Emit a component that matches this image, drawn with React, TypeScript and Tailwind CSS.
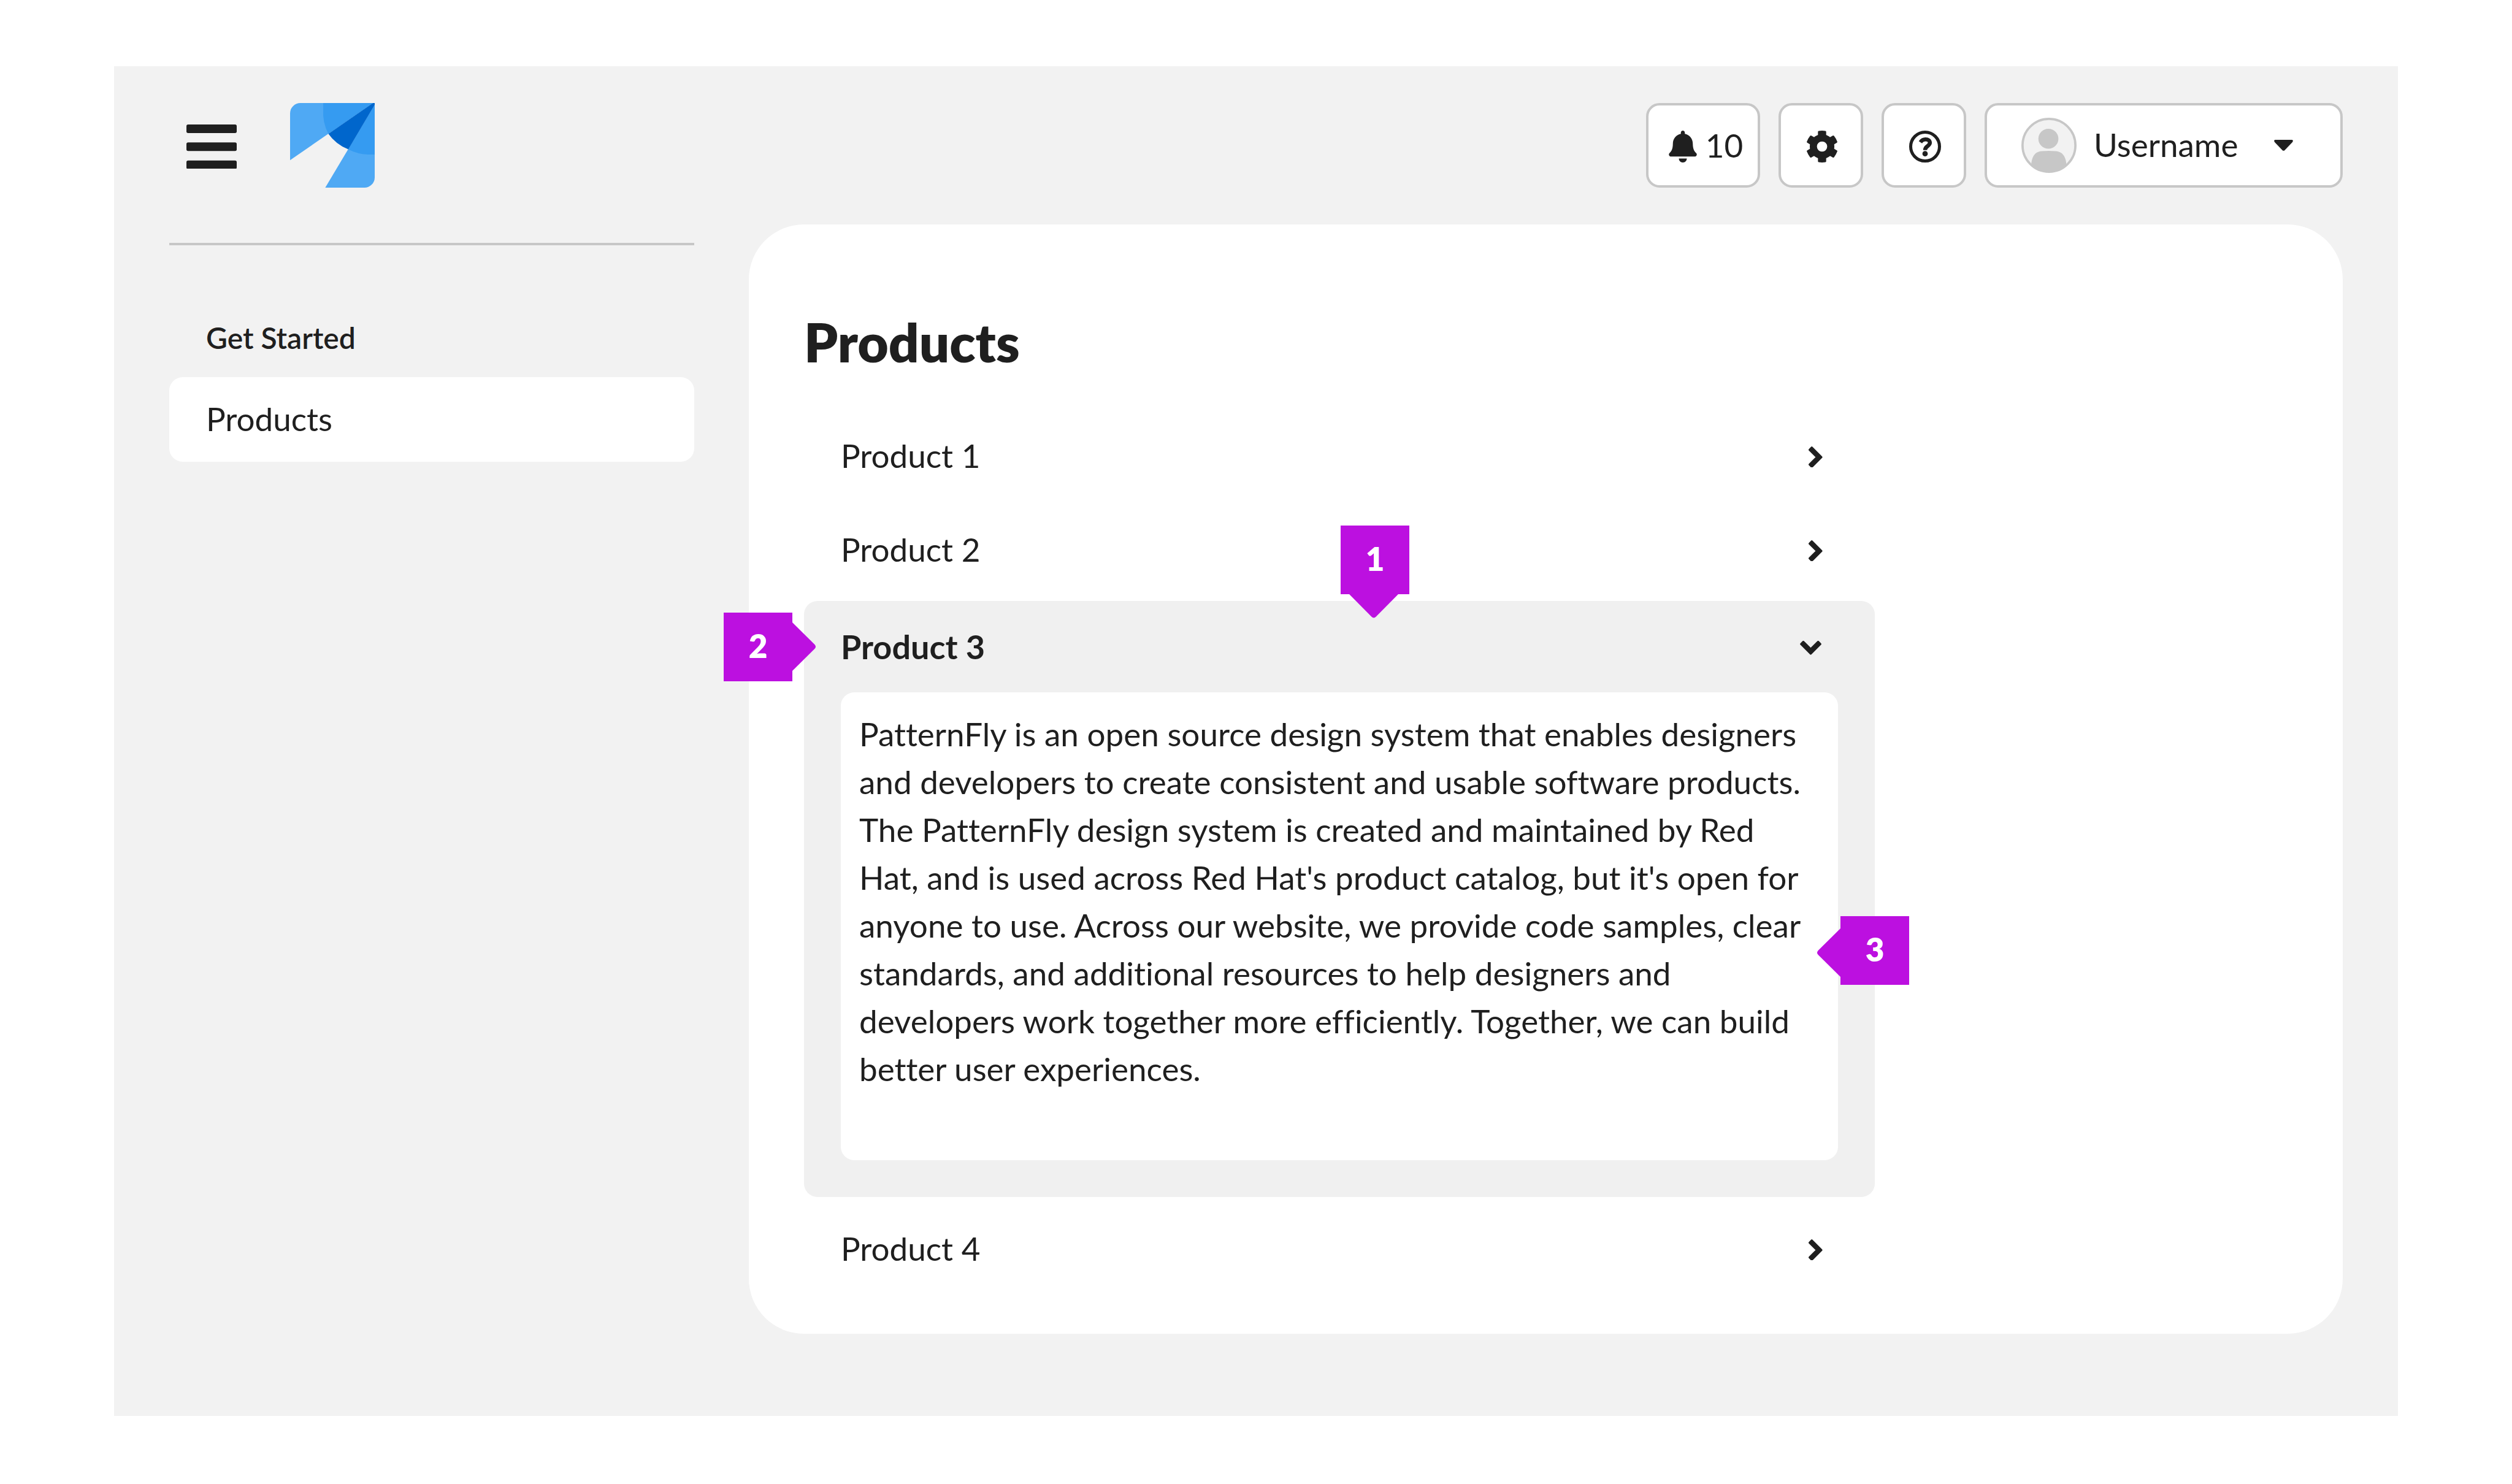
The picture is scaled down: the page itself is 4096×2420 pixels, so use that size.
import type { ReactNode } from "react";
import { FaBell } from "react-icons/fa";

function MenuIcon() {
  return (
    <svg viewBox="0 0 88 78" className="w-[82px]" fill="currentColor" aria-hidden="true">
      <rect y="0" width="88" height="15" rx="3" />
      <rect y="31.5" width="88" height="15" rx="3" />
      <rect y="63" width="88" height="15" rx="3" />
    </svg>
  );
}

function Logo() {
  return (
    <svg viewBox="0 0 148 148" className="size-[138px]" role="img" aria-label="PatternFly">
      <path fill="#4fa9f4" d="M18 0H145L0 100V18A18 18 0 0 1 18 0Z" />
      <path fill="#4fa9f4" d="M148 3V130A18 18 0 0 1 130 148H61.5Z" />
      <path fill="#359bf1" d="M58 0H145L67 53.8A78 78 0 0 1 58 12Z" />
      <path fill="#359bf1" d="M148 3V90H136A78 78 0 0 1 101.8 81Z" />
      <path fill="#0066cc" d="M145 0H148V3L101.8 81A78 78 0 0 1 67 53.8Z" />
    </svg>
  );
}

function CogIcon() {
  return (
    <svg viewBox="-28 -28 56 56" className="size-[52px]" fill="currentColor" aria-hidden="true">
      <circle r="15.3" fill="none" stroke="currentColor" strokeWidth="12.6" />
      {[0, 60, 120, 180, 240, 300].map((angle) => (
        <path
          key={angle}
          transform={`rotate(${angle})`}
          d="M-7.2 -17V-25.8Q-7.2 -27.2 -5.8 -27.5Q0 -28.4 5.8 -27.5Q7.2 -27.2 7.2 -25.8V-17Z"
        />
      ))}
    </svg>
  );
}

function HelpIcon() {
  return (
    <svg viewBox="-28 -28 56 56" className="size-[52px]" fill="none" stroke="currentColor" aria-hidden="true">
      <circle r="25.3" strokeWidth="5.4" />
      <path
        d="M-8.2 -7.6C-5.8 -11.2 -2.6 -12.7 0.8 -12.7C5.4 -12.7 8.4 -10.2 8.4 -6.6C8.4 -0.8 0 -0.9 0 6.2"
        strokeWidth="7"
      />
      <circle cy="12.6" r="4.7" fill="currentColor" stroke="none" />
    </svg>
  );
}

function AvatarIcon() {
  return (
    <svg viewBox="0 0 96 96" className="size-[90px]" aria-hidden="true">
      <clipPath id="avatar-clip">
        <circle cx="48" cy="48" r="47" />
      </clipPath>
      <circle cx="48" cy="48" r="46" fill="#f2f2f2" stroke="#c7c7c7" strokeWidth="4" />
      <g fill="#c7c7c7" clipPath="url(#avatar-clip)">
        <circle cx="47" cy="36.5" r="17.4" />
        <path d="M17 82C18.500 66 24 59 35 58Q47.500 57.200 60 58C71 59 77 66 78.500 82V96H17Z" />
      </g>
    </svg>
  );
}

function CaretIcon() {
  return (
    <svg viewBox="0 0 33 19" className="w-[31px]" fill="currentColor" aria-hidden="true">
      <path d="M2 0H31Q34 0.600 32 4L18.500 18Q16.500 19.800 14.500 18L1 4Q-1 0.600 2 0Z" />
    </svg>
  );
}

function Chevron({ open }: { open: boolean }) {
  return open ? (
    <svg viewBox="0 0 38 25" className="w-[35px]" fill="currentColor" stroke="currentColor" strokeWidth="4" strokeLinejoin="round" aria-hidden="true">
      <path d="M19 22.500L2.200 5.700L5.900 2L19 15.100L32.100 2L35.800 5.700Z" />
    </svg>
  ) : (
    <svg viewBox="0 0 25 38" className="w-[23px]" fill="currentColor" stroke="currentColor" strokeWidth="4" strokeLinejoin="round" aria-hidden="true">
      <path d="M22.500 19L5.700 2.200L2 5.900L15.100 19L2 32.100L5.700 35.800Z" />
    </svg>
  );
}

function HeaderButton({ className, label, children }: { className: string; label?: string; children: ReactNode }) {
  return (
    <button
      type="button"
      aria-label={label}
      className={`flex h-[138px] items-center rounded-[22px] border-4 border-[#c7c7c7] bg-white ${className}`}
    >
      {children}
    </button>
  );
}

function Callout({ n, className, arrow }: { n: number; className: string; arrow: string }) {
  return (
    <div className={`absolute z-10 flex size-[112px] items-center justify-center bg-[#bc10e0] text-white ${className}`}>
      <svg viewBox="0 0 84 41" className={`absolute h-[39px] w-[80px] ${arrow}`} fill="#bc10e0" aria-hidden="true">
        <path d="M0 0L38 38.500Q42 42.500 46 38.500L84 0Z" />
      </svg>
      <span className="relative pb-1 font-extrabold">{n}</span>
    </div>
  );
}

function ProductRow({ name }: { name: string }) {
  return (
    <h2>
      <button type="button" aria-expanded={false} className="flex h-[138px] w-full items-center justify-between pt-1 pr-[85px] pl-[60px]">
        <span className="pb-1">{name}</span>
        <Chevron open={false} />
      </button>
    </h2>
  );
}

export default function App() {
  return (
    <div className="flex min-h-screen bg-white px-[186px] pt-[108px] pb-[111px] font-['Lato',sans-serif] text-[53px] leading-[78px] text-[#1f1f1f] [font-variant-ligatures:none]">
      <div className="flex flex-1 flex-col gap-[60px] bg-[#f2f2f2] px-[90px] pt-[60px] pb-[134px]">
        <header className="flex items-center justify-between">
          <div className="flex items-center gap-[59px]">
            <button type="button" aria-label="Toggle navigation" className="flex size-[138px] items-center justify-center pt-1">
              <MenuIcon />
            </button>
            <Logo />
          </div>
          <div className="flex gap-[30px]">
            <HeaderButton className="w-[186px] justify-center gap-[11px] pt-1 pl-[6px]" label="10 notifications">
              <FaBell size={52} aria-hidden="true" />
              <span className="pb-1">10</span>
            </HeaderButton>
            <HeaderButton className="w-[138px] justify-center pt-1 pl-1" label="Settings">
              <CogIcon />
            </HeaderButton>
            <HeaderButton className="w-[138px] justify-center pt-1 pl-1" label="Help">
              <HelpIcon />
            </HeaderButton>
            <HeaderButton className="w-[584px] gap-[28px] pr-[77px] pl-[56px]">
              <AvatarIcon />
              <span className="flex-1 pb-0.5 text-left">Username</span>
              <CaretIcon />
            </HeaderButton>
          </div>
        </header>

        <div className="flex flex-1 gap-[89px]">
          <nav aria-label="Primary" className="w-[856px] shrink-0 pt-[30px]">
            <hr className="border-t-4 border-[#c7c7c7]" />
            <h2 className="pt-[118px] pb-[31px] pl-[60px] text-[48px] leading-[66px] font-semibold">Get Started</h2>
            <a href="#products" aria-current="page" className="flex h-[138px] items-center rounded-[22px] bg-white px-[60px]">
              <span className="pb-0.5">Products</span>
            </a>
          </nav>

          <main id="products" className="flex-1 rounded-[90px] bg-white px-[90px] pt-[142px]">
            <h1 className="text-[87px] leading-[100px] font-extrabold">Products</h1>
            <div className="mt-[66px] flex w-full max-w-[1746px] flex-col gap-[15px]">
              <ProductRow name="Product 1" />
              <ProductRow name="Product 2" />
              <section className="relative rounded-[22px] bg-[#f0f0f0] px-[60px] pb-[60px]">
                <h2>
                  <button type="button" aria-expanded={true} aria-controls="product-3" className="flex h-[149px] w-full items-center justify-between pt-1 pr-[27px] text-[54px] font-bold">
                    <span className="pb-1">Product 3</span>
                    <Chevron open />
                  </button>
                </h2>
                <div id="product-3" className="rounded-[22px] bg-white pt-[29px] pr-[45px] pb-[110px] pl-[30px]">
                  <p>
                    PatternFly is an open source design system that enables designers and developers to create
                    consistent and usable software products. The PatternFly design system is created and maintained by
                    Red Hat, and is used across Red Hat's product catalog, but it's open for anyone to use. Across our
                    website, we provide code samples, clear standards, and additional resources to help designers and
                    developers work together more efficiently. Together, we can build better user experiences.
                  </p>
                </div>
                <Callout n={1} className="-top-[123px] left-[875px]" arrow="top-full left-[14px]" />
                <Callout n={2} className="top-[19px] -left-[131px]" arrow="top-[36px] left-[91px] -rotate-90" />
                <Callout n={3} className="top-[514px] -right-[56px]" arrow="top-[40px] right-[91px] rotate-90" />
              </section>
              <ProductRow name="Product 4" />
            </div>
          </main>
        </div>
      </div>
    </div>
  );
}
